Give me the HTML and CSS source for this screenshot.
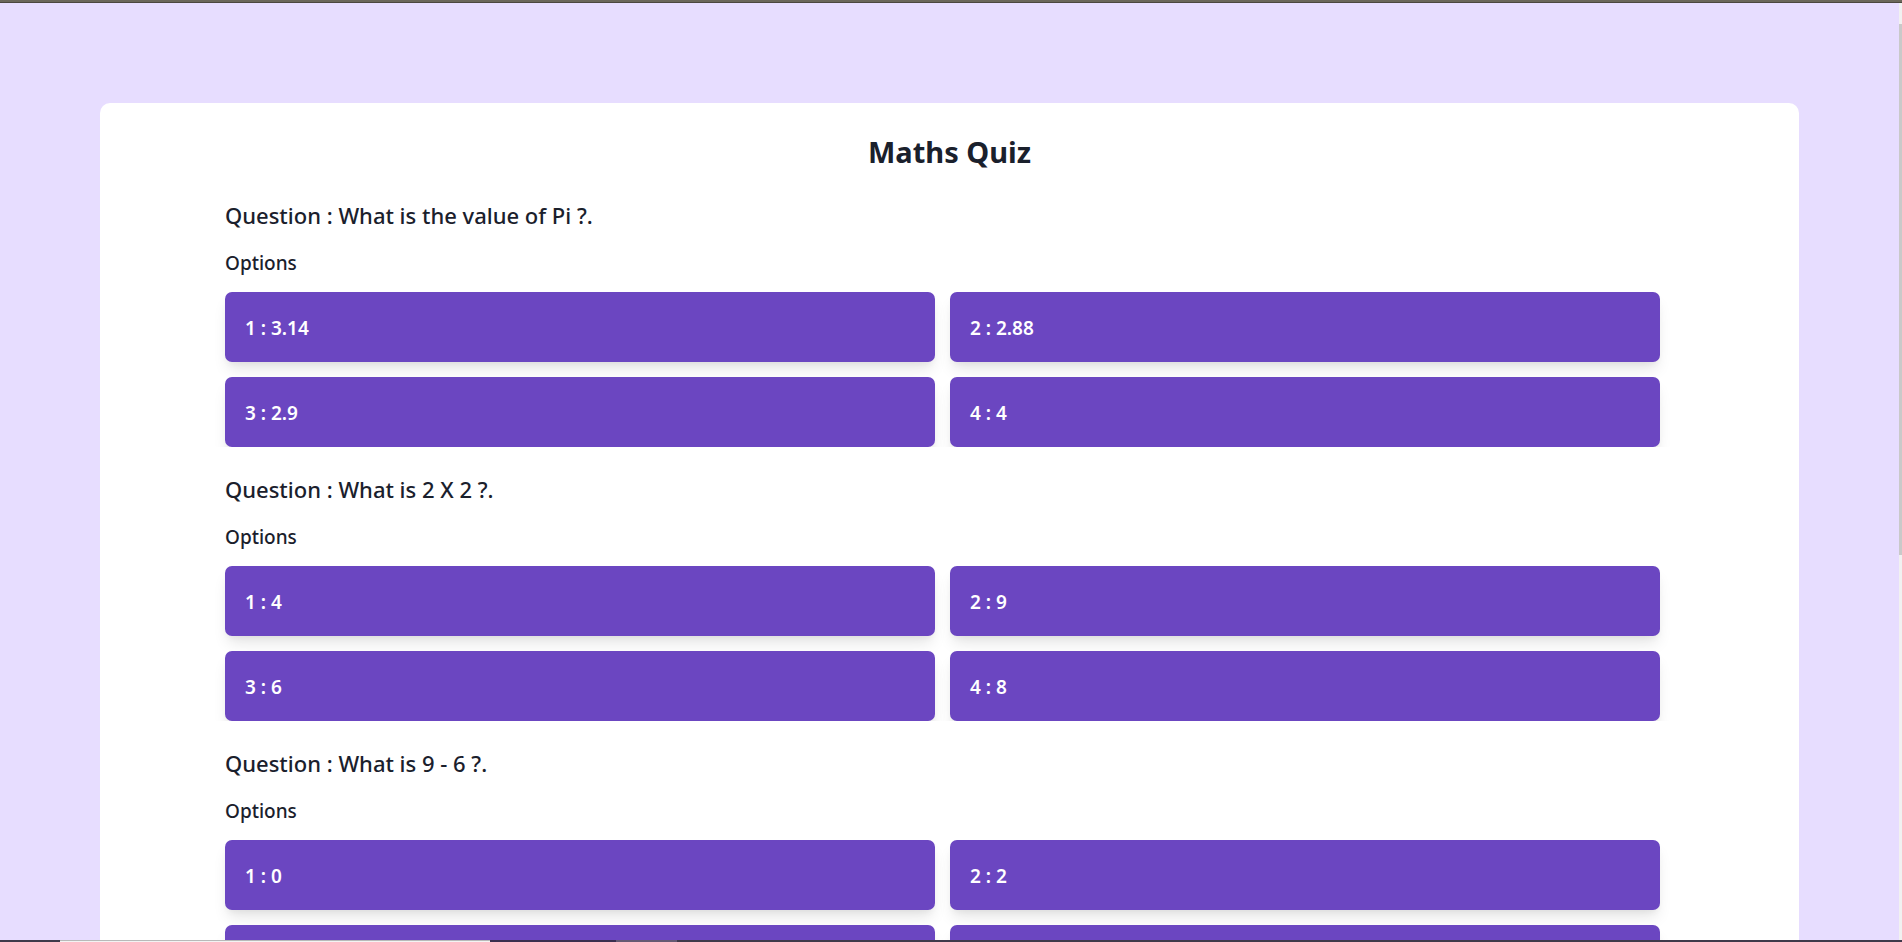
FILE: index.html
```html
<!DOCTYPE html>
<html lang="en">
<head>
<meta charset="utf-8">
<title>Maths Quiz</title>
<link rel="stylesheet" href="styles.css">
</head>
<body>
<div class="window">
  <div class="window-top"></div>
  <div class="viewport">
    <main class="page">
      <div class="card">
        <h1 class="title">Maths Quiz</h1>
        <section class="question">
          <h2 class="question-text">Question : What is the value of Pi ?.</h2>
          <h3 class="options-label">Options</h3>
          <div class="options">
            <button class="option" type="button">1 : 3.14</button>
            <button class="option" type="button">2 : 2.88</button>
            <button class="option" type="button">3 : 2.9</button>
            <button class="option" type="button">4 : 4</button>
          </div>
        </section>
        <section class="question">
          <h2 class="question-text">Question : What is 2 X 2 ?.</h2>
          <h3 class="options-label">Options</h3>
          <div class="options">
            <button class="option" type="button">1 : 4</button>
            <button class="option" type="button">2 : 9</button>
            <button class="option" type="button">3 : 6</button>
            <button class="option" type="button">4 : 8</button>
          </div>
        </section>
        <section class="question">
          <h2 class="question-text">Question : What is 9 - 6 ?.</h2>
          <h3 class="options-label">Options</h3>
          <div class="options">
            <button class="option" type="button">1 : 0</button>
            <button class="option" type="button">2 : 2</button>
            <button class="option" type="button" aria-label="Option 3"></button>
            <button class="option" type="button" aria-label="Option 4"></button>
          </div>
        </section>
      </div>
    </main>
    <div class="scrollbar"><div class="scrollbar-thumb"></div></div>
  </div>
  <div class="taskbar">
    <div class="taskbar-start"></div>
    <div class="taskbar-search"></div>
    <div class="taskbar-gap"></div>
    <div class="taskbar-active"></div>
  </div>
</div>
</body>
</html>
```
FILE: styles.css
```css
* {
  box-sizing: border-box;
}

body {
  margin: 0;
  color: #1a202c;
  font-family: "Noto Sans", "Open Sans", sans-serif;
}

.window {
  display: flex;
  flex-direction: column;
  height: 100vh;
  overflow: hidden;
}

.window-top {
  flex: none;
  height: 3px;
  background: #6b675a;
  border-bottom: 1px solid #4b473f;
}

.viewport {
  display: flex;
  flex: 1;
  min-height: 0;
  overflow: hidden;
}

.page {
  flex: 1;
  padding: 100px;
  background: #e7ddff;
}

.card {
  padding: 28px 0;
  background: #fff;
  border-radius: 10px;
}

.title {
  margin: 0;
  font-size: 29px;
  font-weight: 700;
  line-height: 42px;
  text-align: center;
}

.question {
  margin-top: 26px;
  padding: 0 139px 0 125px;
  overflow: hidden;
}

.question-text {
  margin: 0;
  font-size: 22px;
  font-weight: 500;
  line-height: 32px;
}

.options-label {
  margin: 17px 0 14px;
  font-size: 19px;
  font-weight: 500;
  line-height: 30px;
}

.options {
  display: grid;
  grid-template-columns: 1fr 1fr;
  gap: 15px;
}

.option {
  height: 70px;
  padding: 2px 20px 0;
  color: #fff;
  font: 600 19px/24px "Noto Sans", "Open Sans", sans-serif;
  text-align: left;
  background: #6b46c1;
  border: 0;
  border-radius: 7px;
  box-shadow: 0 10px 15px -3px rgba(0, 0, 0, 0.1), 0 4px 6px -2px rgba(0, 0, 0, 0.05);
}

.scrollbar {
  flex: none;
  width: 3px;
  padding-top: 21px;
  background: #f1f1f1;
}

.scrollbar-thumb {
  height: 58%;
  background: #c9c9c9;
}

.taskbar {
  display: flex;
  flex: none;
  height: 2px;
  background: #3f394a;
}

.taskbar-start {
  width: 60px;
}

.taskbar-search {
  width: 430px;
  background: #f3f3f3;
  border-top: 1px solid #b9b9b9;
}

.taskbar-gap {
  width: 126px;
  background: #3a2f4f;
}

.taskbar-active {
  width: 61px;
  background: #655a73;
}
```
